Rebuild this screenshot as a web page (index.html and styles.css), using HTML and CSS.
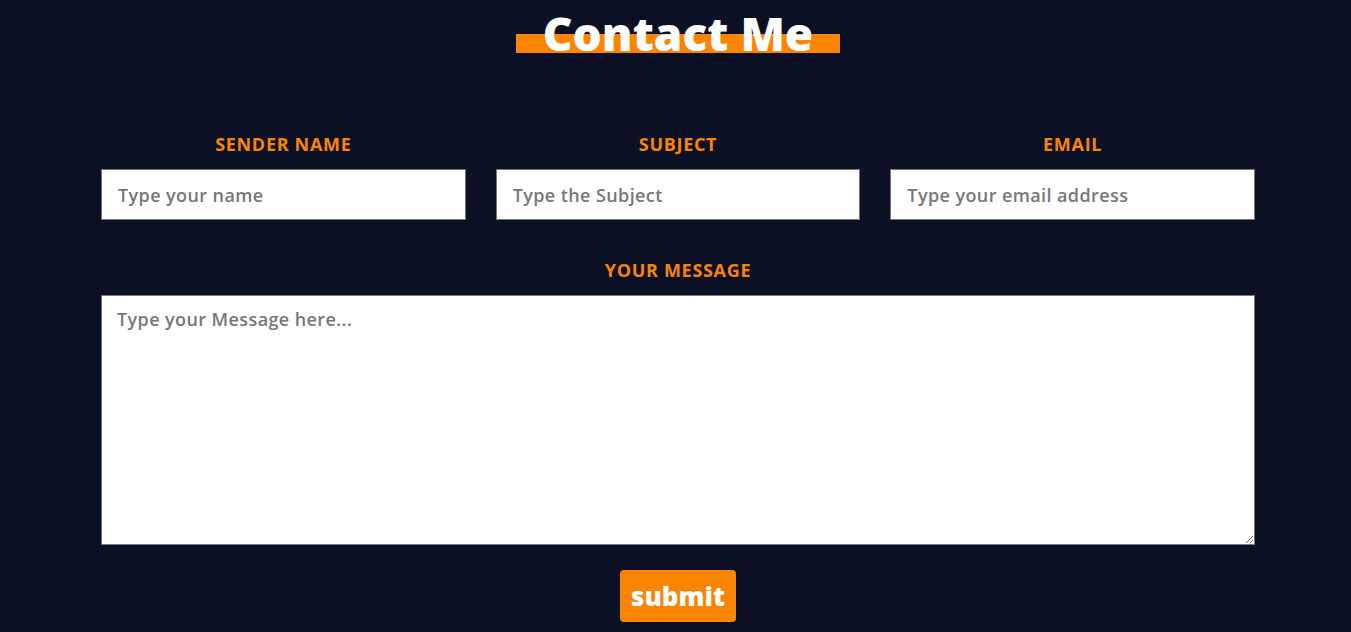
FILE: index.html
```html
<!DOCTYPE html>
<html lang="en">
<head>
<meta charset="utf-8">
<title>Contact Me</title>
<link rel="stylesheet" href="styles.css">
</head>
<body>
<section class="contact">
  <h1 class="title"><span class="title-text">Contact Me</span></h1>
  <form class="form">
    <div class="row">
      <div class="field">
        <label class="label" for="name">SENDER NAME</label>
        <input class="input" id="name" type="text" placeholder="Type your name">
      </div>
      <div class="field">
        <label class="label" for="subject">SUBJECT</label>
        <input class="input" id="subject" type="text" placeholder="Type the Subject">
      </div>
      <div class="field">
        <label class="label" for="email">EMAIL</label>
        <input class="input" id="email" type="email" placeholder="Type your email address">
      </div>
    </div>
    <div class="field message">
      <label class="label" for="msg">YOUR MESSAGE</label>
      <textarea class="textarea" id="msg" placeholder="Type your Message here..."></textarea>
    </div>
    <div class="actions">
      <button class="submit" type="button">submit</button>
    </div>
  </form>
</section>
</body>
</html>
```

FILE: styles.css
```css
* { box-sizing: border-box; }
html, body { margin: 0; padding: 0; }
body {
  background: #0c1024;
  font-family: "Open Sans", "DejaVu Sans", sans-serif;
  height: 632px;
  overflow: hidden;
  padding-left: 5px;
}
.contact {
  width: 1154px;
  margin: 0 auto;
  padding-top: 6px;
}
.title {
  margin: 0;
  display: flex;
  justify-content: center;
  font-size: 46px;
  font-weight: 800;
  line-height: 54px;
  color: #fff;
}
.title-text {
  padding: 0 27px;
  background: linear-gradient(to bottom, transparent 28px, #fb8500 28px, #fb8500 47px, transparent 47px);
  letter-spacing: 0;
}
.form {
  margin-top: 72px;
}
.row {
  display: grid;
  grid-template-columns: repeat(3, 1fr);
  column-gap: 30px;
}
.field {
  display: flex;
  flex-direction: column;
  align-items: stretch;
}
.label {
  text-align: center;
  color: #fb8500;
  font-weight: 700;
  font-size: 18px;
  line-height: 24px;
  letter-spacing: 0.7px;
  margin-bottom: 13px;
}
.input, .textarea {
  font-family: inherit;
  font-size: 18px;
  font-weight: 600;
  letter-spacing: 0.4px;
  color: #333;
  background: #fff;
  border: 1px solid #767676;
  border-radius: 0;
  outline: none;
}
.input {
  height: 51px;
  padding: 0 16px;
}
.input::placeholder, .textarea::placeholder {
  color: #777;
  opacity: 1;
}
.message {
  margin-top: 38px;
}
.textarea {
  height: 250px;
  padding: 11px 15px;
  resize: both;
}
.actions {
  display: flex;
  justify-content: center;
  margin-top: 25px;
}
.submit {
  width: 116px;
  height: 52px;
  border: none;
  border-radius: 4px;
  background: #fb8500;
  color: #fff;
  font-family: inherit;
  font-weight: 800;
  font-size: 26px;
  cursor: pointer;
  padding: 0;
}
```
